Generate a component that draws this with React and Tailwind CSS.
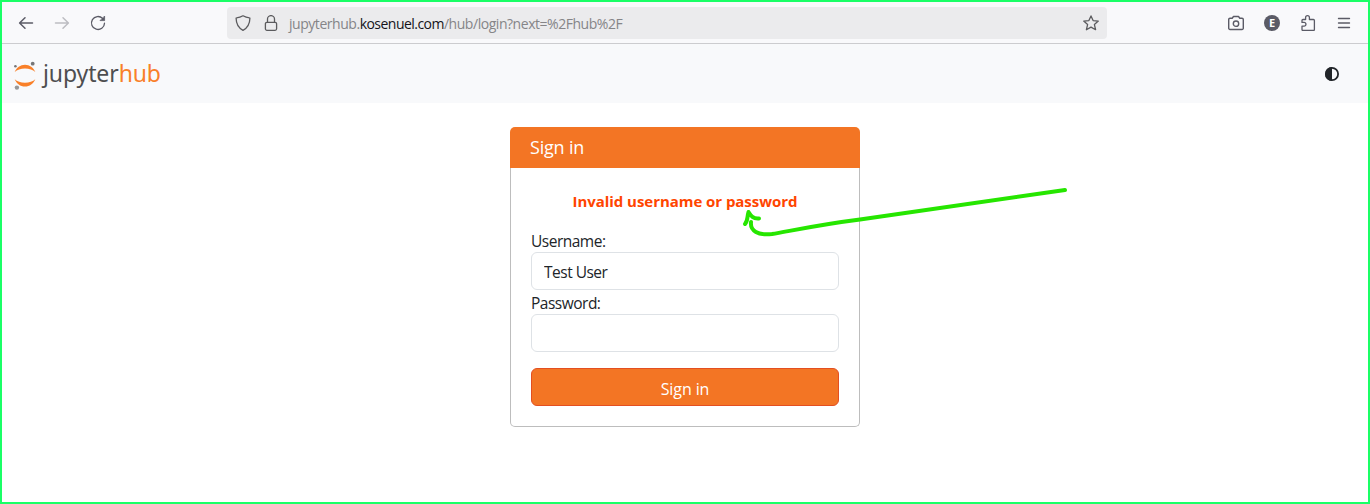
import React from "react";

const stroke = {
  fill: "none",
  stroke: "currentColor",
  strokeLinecap: "round",
  strokeLinejoin: "round",
};

function BackIcon() {
  return (
    <svg className="h-4 w-4 text-[#5b5b66]" viewBox="0 0 16 16" {...stroke} strokeWidth="1.5">
      <path d="M14.500 8H1.800M7 2.800 1.600 8l5.400 5.200" />
    </svg>
  );
}

function ForwardIcon() {
  return (
    <svg className="h-4 w-4 text-[#bdbdc2]" viewBox="0 0 16 16" {...stroke} strokeWidth="1.5">
      <path d="M1.500 8h12.700M9 2.800 14.400 8 9 13.200" />
    </svg>
  );
}

function ReloadIcon() {
  return (
    <svg className="h-4 w-4 text-[#5b5b66]" viewBox="0 0 16 16" {...stroke} strokeWidth="1.3">
      <path d="M12.6 3.4A6.5 6.5 0 1 0 14.5 8.2" />
      <path d="M14.6 1.4v4.2h-4.2z" fill="currentColor" strokeWidth="0.8" />
    </svg>
  );
}

function ShieldIcon() {
  return (
    <svg className="h-4 w-4" viewBox="0 0 16 16" {...stroke} strokeWidth="1.3">
      <path d="M8 .8c2 1.2 4.2 1.9 6.5 2.1.2 0 .4.2.4.4-.1 5.2-1.500 9.300-6.900 12C2.600 12.600 1.200 8.500 1.100 3.300c0-.2.2-.4.4-.4C3.800 2.700 6 2 8 .8z" />
    </svg>
  );
}

function LockIcon() {
  return (
    <svg className="h-4 w-4" viewBox="0 0 16 16" {...stroke} strokeWidth="1.3">
      <rect x="2.400" y="7.300" width="11.200" height="8" rx="1.500" />
      <path d="M4.500 7.300V4.100a3.500 3.500 0 0 1 7 0v3.200" />
    </svg>
  );
}

function StarIcon() {
  return (
    <svg className="h-4 w-4 text-[#5b5b5e]" viewBox="0 0 16 16" {...stroke} strokeWidth="1.3">
      <path d="m8 .9 2.100 4.700 5.200.5-3.900 3.500 1.200 5.100L8 12.100l-4.600 2.600 1.200-5.100L.7 6.100l5.200-.5z" />
    </svg>
  );
}

function CameraIcon() {
  return (
    <svg className="h-4 w-4" viewBox="0 0 16 16" {...stroke} strokeWidth="1.400">
      <path d="M2 3.200h2.200L5.500 1.500h5l1.300 1.700H14a1.300 1.300 0 0 1 1.300 1.300v8.700a1.300 1.300 0 0 1-1.300 1.300H2A1.300 1.300 0 0 1 .7 13.200V4.500A1.300 1.300 0 0 1 2 3.200z" />
      <circle cx="8" cy="8.700" r="2.700" />
    </svg>
  );
}

function PuzzleIcon() {
  return (
    <svg className="h-4 w-4" viewBox="0 0 16 16" {...stroke} strokeWidth="1.300">
      <path d="M2 7.400V5.500a1 1 0 0 1 1-1h2.600V2.600a1.900 1.900 0 0 1 3.800 0v1.900h4a1 1 0 0 1 1 1v9a1 1 0 0 1-1 1H3a1 1 0 0 1-1-1v-3.400h2.100a1.850 1.850 0 0 0 0-3.700z" />
    </svg>
  );
}

function MenuIcon() {
  return (
    <svg className="h-4 w-4" viewBox="0 0 16 16" {...stroke} strokeWidth="1.350">
      <path d="M2.500 3.500h11M2.500 8h11M2.500 12.500h11" />
    </svg>
  );
}

function Toolbar() {
  return (
    <div className="flex h-[42px] shrink-0 items-center border-b border-[#cccccf] bg-[#f9f9fb] text-[#5b5b66]">
      <div className="ml-4 flex w-[209px] items-center gap-5">
        <BackIcon />
        <ForwardIcon />
        <ReloadIcon />
      </div>
      <div className="flex h-8 w-[880px] items-center rounded-[4px] bg-[#ebebed] pr-2 pl-2 text-[#5b5b5e]">
        <ShieldIcon />
        <span className="ml-3 flex">
          <LockIcon />
        </span>
        <span className="ml-[10px] flex-1 pt-[2px] font-['Open_Sans','Noto_Sans',sans-serif] text-[14px] leading-8 tracking-[-0.46px] whitespace-nowrap text-[#858588]">
          jupyterhub.<span className="tracking-[-0.53px] text-[#15141a]">kosenuel.com</span>/hub/login?next=%2Fhub%2F
        </span>
        <StarIcon />
      </div>
      <div className="ml-[121px] flex items-center gap-5">
        <CameraIcon />
        <span className="flex h-4 w-4 items-center justify-center rounded-full bg-[#5b5b66] font-['Open_Sans',sans-serif] text-[11px] leading-none font-bold text-white">
          E
        </span>
        <PuzzleIcon />
        <MenuIcon />
      </div>
    </div>
  );
}

function Logo() {
  return (
    <div className="flex items-center">
      <svg className="h-8 w-6" viewBox="0 -1 24 32">
        <path d="M1.700 13C3.500 8.600 7.300 5.700 12 5.700s8.500 2.900 10.300 7.300C20 10.700 16.200 9.500 12 9.500S4 10.700 1.700 13z" fill="#f98029" />
        <path d="M1.700 20.300C3.500 24.700 7.300 27.600 12 27.600s8.500-2.900 10.300-7.300C20 22.600 16.200 23.800 12 23.800S4 22.600 1.700 20.300z" fill="#f98029" />
        <circle cx="19.700" cy="4.700" r="1.900" fill="#767677" />
        <circle cx="2.400" cy="7.200" r="1.300" fill="#767677" />
        <circle cx="3.900" cy="28.600" r="2.200" fill="#989898" />
      </svg>
      <span className="ml-[6px] pb-[2px] font-['Noto_Sans','Open_Sans',sans-serif] text-[23px] leading-[30px] tracking-[-0.1px] text-[#4e4e50]">
        jupyter<span className="text-[#f98029]">hub</span>
      </span>
    </div>
  );
}

function Header() {
  return (
    <header className="flex h-[59px] shrink-0 items-center justify-between bg-[#f8f9fb] pr-[29px] pl-[11px]">
      <Logo />
      <svg className="h-[14px] w-[14px] text-[#212529]" viewBox="0 0 14 14">
        <circle cx="7" cy="7" r="6.100" fill="none" stroke="currentColor" strokeWidth="1.800" />
        <path d="M7 0a7 7 0 0 0 0 14z" fill="currentColor" />
      </svg>
    </header>
  );
}

function SignInCard() {
  return (
    <form
      className="mx-auto mt-6 flex h-[300px] w-[350px] flex-col font-['Open_Sans','Noto_Sans',sans-serif] text-[15.5px] tracking-[-0.5px] text-[#212529]"
      onSubmit={(e) => e.preventDefault()}
    >
      <div className="h-[41px] shrink-0 rounded-t-[5px] bg-[#f37524] pl-5 text-[18px] leading-[41px] tracking-[-0.2px] text-white">
        Sign in
      </div>
      <div className="flex flex-1 flex-col rounded-b-[5px] border border-t-0 border-[#bdbdbd] bg-white px-5 pt-[21px]">
        <p className="text-center text-[15px] leading-6 font-bold tracking-[-0.05px] text-[#ff4500]">
          Invalid username or password
        </p>
        <label className="mt-[17px] leading-[22px]" htmlFor="username">Username:</label>
        <input
          id="username"
          type="text"
          defaultValue="Test User"
          className="h-[38px] rounded-md border border-[#dee2e6] bg-white px-3 pt-[2px] outline-none"
        />
        <label className="mt-[2px] leading-[22px]" htmlFor="password">Password:</label>
        <input
          id="password"
          type="password"
          className="h-[38px] rounded-md border border-[#dee2e6] bg-white px-3 outline-none"
        />
        <button
          className="mt-4 h-[38px] rounded-md border border-[#e34f21] bg-[#f37524] pt-[3px] text-[16px] tracking-[-0.1px] text-white"
          type="submit"
        >
          Sign in
        </button>
      </div>
    </form>
  );
}

export default function App() {
  return (
    <div className="relative flex h-[504px] w-[1370px] flex-col overflow-hidden border-2 border-[#1aff66] bg-white">
      <Toolbar />
      <Header />
      <SignInCard />
      <svg
        className="pointer-events-none absolute top-[178px] left-[728px] h-[70px] w-[350px] text-[#26e600]"
        viewBox="730 180 350 70"
        {...stroke}
        strokeWidth="4"
      >
        <path d="M1065 190 860 219.500C820 224.500 790 231 772 234C758 235.500 750 231 751 222" />
        <path d="M745 224C748 221 747 217 748.500 212C751 216 753 219 759 218.500" />
      </svg>
    </div>
  );
}
